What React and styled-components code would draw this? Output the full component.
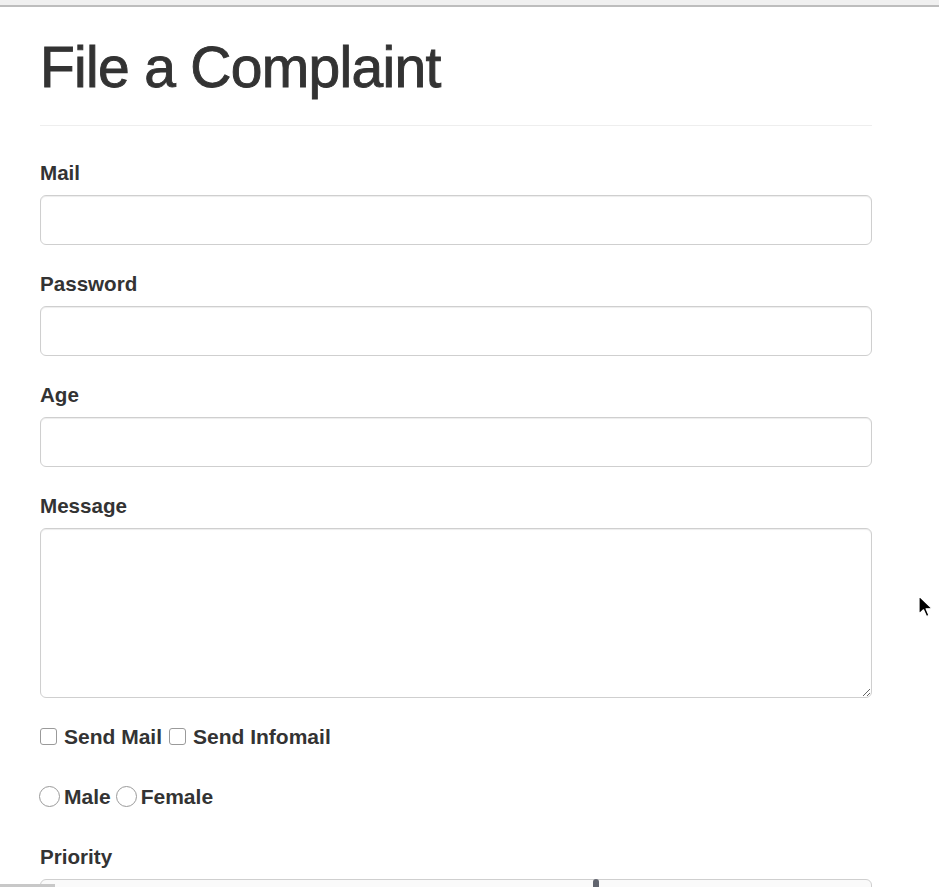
import React from "react";
import styled, { createGlobalStyle } from "styled-components";

const Global = createGlobalStyle`
  html, body { margin: 0; padding: 0; background: #fff; }
  body {
    font-family: "Liberation Sans", Arial, Helvetica, sans-serif;
    color: #333;
    overflow: hidden;
  }
  * { box-sizing: border-box; }
`;

const Page = styled.div`
  min-height: 887px;
  position: relative;
`;

const TopBar = styled.div`
  height: 7px;
  background: #f0f0f0;
  border-bottom: 2px solid #bdbdbd;
`;

const Container = styled.div`
  width: 832px;
  margin-left: 40px;
  display: flex;
  flex-direction: column;
`;

const Title = styled.h1`
  margin: 29px 0 0;
  font-size: 57px;
  line-height: 1.1;
  font-weight: 500;
  color: #333;
  letter-spacing: -0.7px;
  -webkit-text-stroke: 0.9px #333;
`;

const Rule = styled.hr`
  margin: 26px 0 0;
  border: 0;
  border-top: 1px solid #eeeeee;
  height: 0;
`;

const Form = styled.form`
  display: flex;
  flex-direction: column;
  margin-top: 32px;
`;

const Group = styled.div`
  display: flex;
  flex-direction: column;
  margin-bottom: 24px;
`;

const Label = styled.label`
  font-size: 20.6px;
  line-height: 29px;
  font-weight: bold;
  margin-bottom: 8px;
  color: #333;
`;

const Input = styled.input`
  height: 50px;
  width: 100%;
  border: 1px solid #cfcfcf;
  border-radius: 6px;
  box-shadow: inset 0 1px 1px rgba(0, 0, 0, 0.075);
  font-size: 20px;
  padding: 8px 18px;
  font-family: inherit;
  outline: none;
`;

const TextArea = styled.textarea`
  height: 170px;
  width: 100%;
  border: 1px solid #cfcfcf;
  border-radius: 6px;
  box-shadow: inset 0 1px 1px rgba(0, 0, 0, 0.075);
  font-size: 20px;
  padding: 8px 18px;
  font-family: inherit;
  outline: none;
  resize: vertical;
  display: block;
`;

const Select = styled.select`
  height: 50px;
  width: 100%;
  border: 1px solid #cfcfcf;
  border-radius: 6px;
  background: #fafafa;
  font-size: 20px;
  padding: 8px 18px;
  font-family: inherit;
`;

const ChoiceRow = styled.div`
  display: flex;
  align-items: center;
  height: 29px;
  margin-bottom: 31px;
`;

const Choice = styled.label`
  display: flex;
  align-items: center;
  font-size: 21px;
  font-weight: bold;
  line-height: 29px;
  color: #333;
  margin-right: ${(p) => p.$gap}px;
`;

const Box = styled.input`
  appearance: none;
  -webkit-appearance: none;
  margin: 0 ${(p) => (p.type === "radio" ? 4 : 7)}px 0 ${(p) => (p.type === "radio" ? -1 : 0)}px;
  width: ${(p) => (p.type === "radio" ? 21 : 17)}px;
  height: ${(p) => (p.type === "radio" ? 21 : 17)}px;
  border: 1px solid #9a9a9a;
  border-radius: ${(p) => (p.type === "radio" ? "50%" : "3px")};
  background: #fff;
  flex: none;
`;

const Strip = styled.div`
  position: fixed;
  left: 0;
  bottom: 0;
  width: 55px;
  height: 3px;
  background: #c8c8c8;
`;

const Scrub = styled.div`
  position: fixed;
  left: 593px;
  bottom: 0;
  width: 6px;
  height: 8px;
  background: #62656f;
  border-radius: 3px 3px 0 0;
`;

const Cursor = styled.svg`
  position: fixed;
  left: 917px;
  top: 595px;
`;

export default function App() {
  return (
    <Page>
      <Global />
      <TopBar />
      <Container>
        <Title>File a Complaint</Title>
        <Rule />
        <Form onSubmit={(e) => e.preventDefault()}>
          <Group>
            <Label>Mail</Label>
            <Input type="email" />
          </Group>
          <Group>
            <Label>Password</Label>
            <Input type="password" />
          </Group>
          <Group>
            <Label>Age</Label>
            <Input type="number" />
          </Group>
          <Group>
            <Label>Message</Label>
            <TextArea />
          </Group>
          <ChoiceRow>
            <Choice $gap={7}>
              <Box type="checkbox" />
              Send Mail
            </Choice>
            <Choice $gap={0}>
              <Box type="checkbox" />
              Send Infomail
            </Choice>
          </ChoiceRow>
          <ChoiceRow>
            <Choice $gap={6}>
              <Box type="radio" name="gender" />
              Male
            </Choice>
            <Choice $gap={0}>
              <Box type="radio" name="gender" />
              Female
            </Choice>
          </ChoiceRow>
          <Group>
            <Label>Priority</Label>
            <Select>
              <option>High</option>
              <option>Medium</option>
              <option>Low</option>
            </Select>
          </Group>
        </Form>
      </Container>
      <Strip />
      <Scrub />
      <Cursor width="16" height="24" viewBox="0 0 16 24">
        <path
          d="M2 1 L2 19 L6.5 14.8 L9.5 21.5 L12 20.4 L9.1 13.8 L15 13.5 Z"
          fill="#000"
          stroke="#fff"
          strokeWidth="1.2"
          strokeLinejoin="round"
        />
      </Cursor>
    </Page>
  );
}
